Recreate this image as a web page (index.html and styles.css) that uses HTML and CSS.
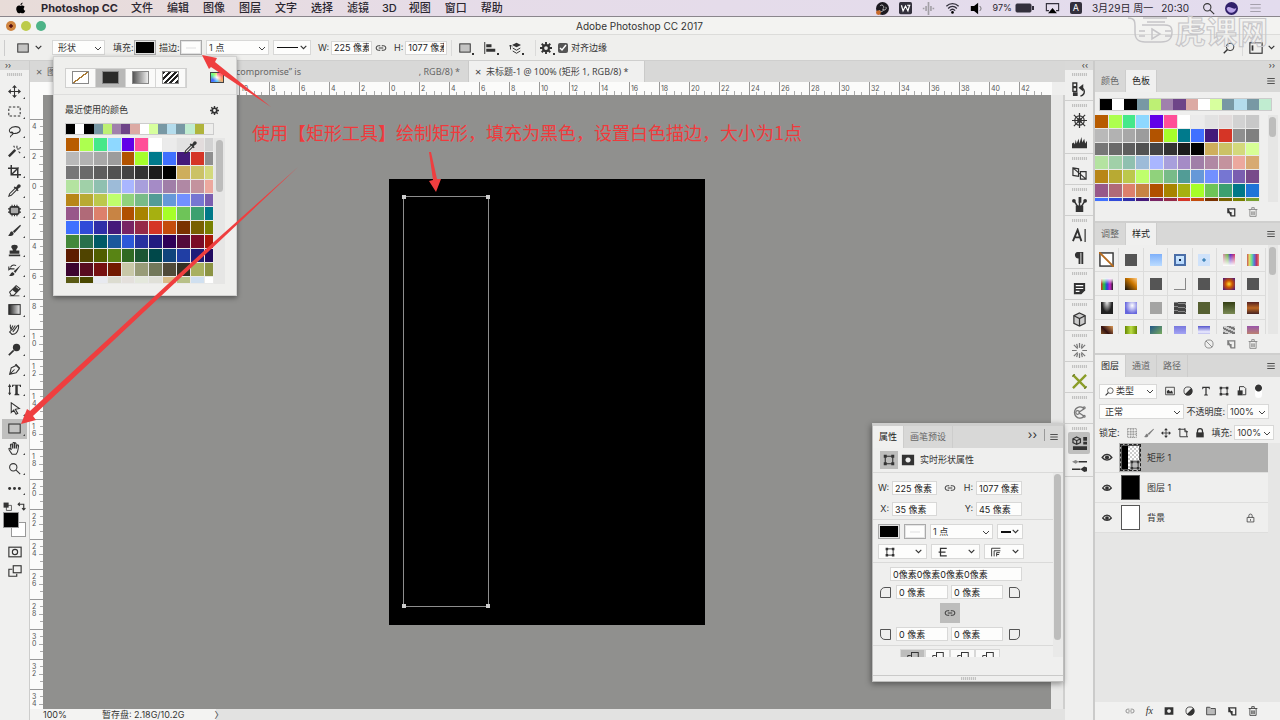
FILE: index.html
```html
<!DOCTYPE html>
<html lang="zh-CN">
<head>
<meta charset="utf-8">
<title>Adobe Photoshop CC 2017</title>
<link rel="stylesheet" href="styles.css">
</head>
<body>
<svg class="sprite" aria-hidden="true">
  <symbol id="link" viewBox="0 0 16 16"><path d="M7 5H4.500a3 3 0 0 0 0 6H7M9 5h2.500a3 3 0 0 1 0 6H9M5 8h6"/></symbol>
  <symbol id="burger" viewBox="0 0 16 16"><path d="M2 4h12M2 8h12M2 12h12"/></symbol>
  <symbol id="chev" viewBox="0 0 16 16"><path stroke-width="2" d="M3 5l5 5 5-5"/></symbol>
  <symbol id="gear" viewBox="0 0 16 16"><circle cx="8" cy="8" r="4" stroke-width="3"/><path stroke-width="2.500" d="M8 0v4M8 12v4M0 8h4M12 8h4M2.300 2.300l3 3M10.700 10.700l3 3M2.300 13.700l3-3M10.700 5.300l3-3"/></symbol>
  <symbol id="search" viewBox="0 0 16 16"><circle cx="6.500" cy="6.500" r="4.500"/><path d="M10 10l5 5"/></symbol>
  <symbol id="searchl" viewBox="0 0 16 16"><circle cx="9.500" cy="6.500" r="5"/><path stroke-width="2" d="M6 10l-5 5"/></symbol>
  <symbol id="move" viewBox="0 0 16 16"><path d="M8 2v12M2 8h12"/><path class="f" d="M8 0l3 3.500H5zM8 16l3-3.500H5zM0 8l3.500-3v6zM16 8l-3.500-3v6z"/></symbol>
  <symbol id="marquee" viewBox="0 0 16 16"><rect x="1" y="2.500" width="14" height="11" stroke-dasharray="3 2"/></symbol>
  <symbol id="lasso" viewBox="0 0 16 16"><path d="M4 10C-1 7 3 2 9 2c7 0 8 6 2 8-4 1-7 0-7-1s3 0 2 2-3 1-3 4"/></symbol>
  <symbol id="wand" viewBox="0 0 16 16"><path stroke-width="3" d="M1 14l8-8"/><path d="M11 1v3M14 4l2-1M13 8l2 2M7 1l1 2M11 5l3 0"/></symbol>
  <symbol id="crop" viewBox="0 0 16 16"><path stroke-width="1.800" d="M4 0v12h12M0 4h12v12M5 11l8-8"/></symbol>
  <symbol id="dropper" viewBox="0 0 16 16"><path d="M9 5L2 12l-1 3 3-1 7-7"/><path class="f" d="M7 4l5 5 1-1-1-2 3-2c2-2-1-5-3-3l-2 3-2-1z"/></symbol>
  <symbol id="patch" viewBox="0 0 16 16"><rect x="2.500" y="3.500" width="11" height="9" rx="2" fill="#aaa" stroke-width="2"/><path d="M5 1v3M8 1v3M11 1v3M5 12v3M8 12v3M11 12v3M0 6h3M0 10h3M13 6h3M13 10h3"/></symbol>
  <symbol id="brush" viewBox="0 0 16 16"><path class="f" d="M15 1L6 9l2 2 8-9zM5 9c-3 0-2 4-5 5 4 2 7 0 7-3z"/></symbol>
  <symbol id="stamp" viewBox="0 0 16 16"><path class="f" d="M6 8c0-2-2-3-2-4a4 3 0 0 1 8 0c0 1-2 2-2 4h4v4H2V8zM1 13h14v2H1z"/></symbol>
  <symbol id="hbrush" viewBox="0 0 16 16"><path class="f" d="M16 1L7 9l2 2zM6 10c-3 0-2 3-5 4 4 2 7 0 7-2z"/><path d="M2 6h6M1 3v4l3-2M3 4c2-3 5-3 7-2"/></symbol>
  <symbol id="eraser" viewBox="0 0 16 16"><path d="M2 10l8-8 5 4-8 8H4z"/><path class="f" d="M5 7l4-4 5 4-4 4zM2 15h12v-1H2z"/></symbol>
  <symbol id="smudge" viewBox="0 0 16 16"><path d="M3 2c-1 4 1 5 1 7l-2 2 3 3c5 0 7-3 8-8V2M6 3L4 7M9 3l-4 6M12 3L6 11"/></symbol>
  <symbol id="dodge" viewBox="0 0 16 16"><circle class="f" cx="10.500" cy="5.500" r="4.500"/><path stroke-width="2" d="M7 9l-6 6"/></symbol>
  <symbol id="pen" viewBox="0 0 16 16"><path d="M2 14l2-8 6-3 4 4-4 5zM2 14l6-6M9 2l5 5"/><path class="f" d="M10 1l5 5-1 1-5-5z"/></symbol>
  <symbol id="type" viewBox="0 0 16 16"><path d="M2 3v11" /><path class="f" d="M0 5l2-4 2 4zM0 12h4l-2 3zM5 2h11v3h-1l-1-2h-2v10l2 1v1H8v-1l1-1V3H7L6 5H5z"/></symbol>
  <symbol id="arrow" viewBox="0 0 16 16"><path d="M4 1v12l3-3 3 5 2-1-3-5 5-1z"/></symbol>
  <symbol id="rect" viewBox="0 0 16 16"><rect x="1" y="2.500" width="14" height="11" fill="#c4c4c3"/></symbol>
  <symbol id="hand" viewBox="0 0 16 16"><path d="M5 15C3 12 1 10 1 8c1-1 2 0 3 2L3 4c0-2 2-2 2 0l1 4V2c0-2 2-2 2 0v6-6c0-2 2-1 2 1v5l1-4c1-1 2 0 2 1-1 4 0 7-3 10z"/></symbol>
  <symbol id="dots" viewBox="0 0 16 16"><circle class="f" cx="2" cy="8" r="1.800"/><circle class="f" cx="8" cy="8" r="1.800"/><circle class="f" cx="14" cy="8" r="1.800"/></symbol>
  <symbol id="grad" viewBox="0 0 16 16"><rect x="1" y="2" width="14" height="12" fill="url(#gr)"/></symbol>
  <symbol id="mask" viewBox="0 0 16 16"><path class="f" fill-rule="evenodd" d="M1 2h14v12H1zM8 5a3 3 0 1 0 .1 0z"/></symbol>
  <symbol id="qmask" viewBox="0 0 16 16"><rect x="1" y="2.500" width="14" height="11"/><circle cx="8" cy="8" r="3"/></symbol>
  <symbol id="screen" viewBox="0 0 16 16"><path d="M5 6H1v8h9v-3"/><rect x="6" y="2" width="9" height="8"/></symbol>
  <symbol id="page" viewBox="0 0 16 16"><path stroke-width="2" d="M3 3h11v11H8zM8 14V9H3V3"/></symbol>
  <symbol id="trash" viewBox="0 0 16 16"><path d="M1 4h14M3 4v11h10V4M6 4V1h4v3M6 7v6M8 7v6M10 7v6"/></symbol>
  <symbol id="no" viewBox="0 0 16 16"><circle cx="8" cy="8" r="6.500"/><path d="M3 3l10 10"/></symbol>
  <symbol id="half" viewBox="0 0 16 16"><circle cx="8" cy="8" r="6.500"/><path class="f" d="M13 3A7 7 0 1 1 3 13z"/></symbol>
  <symbol id="folder" viewBox="0 0 16 16"><path fill="#bbb" d="M1 14V2h5l2 2h7v10z"/></symbol>
  <symbol id="pic" viewBox="0 0 16 16"><path d="M1 2h14v12H1z"/><path class="f" d="M3 12V8l3-2 2 3 3-2 2 5z"/></symbol>
  <symbol id="tee" viewBox="0 0 16 16"><path class="f" d="M2 1h12v4h-1l-1-2H9v10l2 1v1H5v-1l2-1V3H4L3 5H2z"/></symbol>
  <symbol id="shape" viewBox="0 0 16 16"><path d="M3 3h10v10H3z" stroke-width="1.500"/><path class="f" d="M1 1h4v4H1zM11 1h4v4h-4zM1 11h4v4H1zM11 11h4v4h-4z"/></symbol>
  <symbol id="board" viewBox="0 0 16 16"><path stroke-width="1.500" d="M3 0v14h11V5L10 2H0M11 0v6h5M14 14h2"/></symbol>
  <symbol id="smart" viewBox="0 0 16 16"><path stroke-width="1.500" d="M4 8V1h7l3 3v10H9"/><path class="f" d="M1 7h8v8H1z"/></symbol>
  <symbol id="checker" viewBox="0 0 16 16"><path d="M1 1h14v14H1zM6 1v14M10 1v14M1 6h14M1 10h14" stroke-dasharray="2 1"/></symbol>
  <symbol id="lock" viewBox="0 0 16 16"><path class="f" d="M2 7h12v8H2z"/><path stroke-width="2" d="M4 8V5a4 4 0 0 1 8 0v3"/></symbol>
  <symbol id="lockl" viewBox="0 0 16 16"><path d="M2 7h12v8H2zM5 7V4a3 3 0 0 1 6 0v3M8 10v3"/></symbol>
  <symbol id="eye" viewBox="0 0 16 16"><path stroke-width="2" d="M1 8c4-6 10-6 14 0-4 5-10 5-14 0z"/><circle class="f" cx="8" cy="8" r="3"/></symbol>
  <symbol id="align" viewBox="0 0 16 16"><path d="M1 0v16"/><path class="f" d="M3 3h7v4H3zM3 9h12v4H3z"/></symbol>
  <symbol id="stack" viewBox="0 0 16 16"><path class="f" d="M4 4l6-3 6 3-6 3z"/><path d="M5 8l5 3 5-3M5 12l5 3 5-3M2 10V4M0 6l2-2 2 2"/></symbol>
  <symbol id="none" viewBox="0 0 16 16"><rect x="1" y="1" width="14" height="14" fill="#fff" stroke-width="1.500"/><path stroke="#b76b1c" stroke-width="2" d="M0 0l16 16"/></symbol>
  <linearGradient id="gr"><stop offset="0" stop-color="#222"/><stop offset="1" stop-color="#eee"/></linearGradient>
</svg>

<div class="app">
  <header class="menubar">
    <svg class="apple" viewBox="0 0 16 16"><path d="M11 0c0 2-1 3-3 4 0-2 1-3 3-4zM8 5c2-1 4-1 6 1-2 2-2 5 1 6-2 5-4 4-7 3-3 2-5 0-6-4C1 7 4 3 8 5z"/></svg>
    <nav class="menus"><b>Photoshop CC</b><span>文件</span><span>编辑</span><span>图像</span><span>图层</span><span>文字</span><span>选择</span><span>滤镜</span><span class="td">3D</span><span>视图</span><span>窗口</span><span>帮助</span></nav>
    <div class="tray">
      <svg class="t13" viewBox="0 0 16 16"><circle cx="8" cy="8" r="8" fill="#1c1a20"/><path d="M5 5c2-3 6 0 4 3M12 6c2 3-2 5-4 3M4 10c2 3 5 2 5-1" fill="none" stroke="#ddd"/><circle cx="3" cy="13" r="3" fill="#c86a2a"/></svg>
      <svg class="t13" viewBox="0 0 16 16"><rect width="16" height="15" rx="2" fill="#33303c"/><path d="M3 4l2 7 3-6 3 6 2-7M10 4h4" fill="none" stroke="#fff" stroke-width="1.500"/></svg>
      <svg class="t13 dim" viewBox="0 0 16 16"><path d="M8 0v16M5 5v6M11 5v6M2 7v2M14 7v2" stroke="#777" stroke-width="2"/></svg>
      <svg class="t16" viewBox="0 0 16 16"><path d="M1 6c4-4 10-4 14 0M3 8.500c3-3 7-3 10 0M5 11c2-2 4-2 6 0" fill="none" stroke="#33303c" stroke-width="1.500"/><circle cx="8" cy="13" r="1.500"/></svg>
      <svg class="t13" viewBox="0 0 16 16"><path d="M1 5h4l5-4v14l-5-4H1z"/><path d="M12 5c2 2 2 4 0 6" fill="none" stroke="#555"/></svg>
      <span class="pct">97%</span>
      <svg class="batt" viewBox="0 0 20 12"><rect x="1" y="2" width="15" height="8" rx="1" stroke="#33303c" fill="#33303c"/><path d="M18 4v4"  stroke="#33303c" stroke-width="2"/></svg>
      <svg class="t16" viewBox="0 0 16 16"><path d="M4 11H1V3h14v8h-3" fill="none" stroke="#33303c" stroke-width="1.300"/><path d="M8 8l5 6H3z"/></svg>
      <span class="abox">A</span><span class="date">3月29日 周一</span><span class="time">20:30</span>
      <svg class="t13 ic"><use href="#search"/></svg>
      <svg class="t13" viewBox="0 0 16 16"><circle cx="8" cy="8" r="8" fill="#30206a"/><path d="M2 8c3-5 8 3 12-1-1 8-11 8-12 1z" fill="#b9a4e8"/></svg>
      <svg class="t16 ic faint"><use href="#burger"/></svg>
    </div>
  </header>
  <div class="titlebar"><i class="d1"></i><i class="d2"></i><i class="d3"></i><h1>Adobe Photoshop CC 2017</h1></div>

  <div class="options">
    <span class="grip"></span>
    <button class="tool-now" aria-label="矩形工具"><svg class="ic"><use href="#rect"/></svg><svg class="ic c9"><use href="#chev"/></svg></button>
    <select class="w52" aria-label="模式"><option>形状</option></select>
    <span class="lab">填充:</span><button class="chip black" aria-label="填充"></button>
    <span class="lab">描边:</span><button class="chip white" aria-label="描边"></button>
    <select class="w62" aria-label="描边宽度"><option>1 点</option></select>
    <button class="linesel" aria-label="线型"><i></i><svg class="ic c9"><use href="#chev"/></svg></button>
    <label class="num">W:<input value="225 像素"></label>
    <svg class="ic i12"><use href="#link"/></svg>
    <label class="num second">H:<input value="1077 像素"></label>
    <span class="sep"></span>
    <button class="ob" aria-label="路径操作"><svg class="ic"><use href="#rect"/></svg></button>
    <button class="ob" aria-label="对齐"><svg class="ic"><use href="#align"/></svg></button>
    <button class="ob" aria-label="排列"><svg class="ic"><use href="#stack"/></svg></button>
    <span class="sep"></span>
    <button class="ob last" aria-label="设置"><svg class="ic"><use href="#gear"/></svg></button>
    <label class="check"><input type="checkbox" checked>对齐边缘</label>
    <span class="grow"></span>
    <svg class="ic i12"><use href="#searchl"/></svg><span class="sep"></span>
    <svg class="ic ws" viewBox="0 0 16 16"><rect x="1" y="2" width="14" height="12"/><path d="M4 5v6" stroke-width="2"/></svg><svg class="ic c9"><use href="#chev"/></svg>
    <div class="watermark"><svg viewBox="0 0 48 30"><path d="M1 3c7 0 7 4 7 8v6c0 8 4 10 10 10h16c8 0 11-3 11-10s-4-7-8-7H15M16 3h24M20 7h18M12 16h6M38 16h6M12 21h6M38 21h6M25 14l8 5-8 5z"/></svg><span>虎课网</span></div>
  </div>

  <main class="work">
    <aside class="tools"><div class="strip">››</div><span class="dotgrip"></span><div class="toollist" id="tools"></div>
      <div class="mini"><svg class="ic i9" viewBox="0 0 16 16"><path d="M6 6h9v9H6z"/><path class="f" d="M1 1h9v9H1z"/></svg><svg class="ic i9" viewBox="0 0 16 16"><path stroke-width="2" d="M2 4h10v10M5 1L2 4l3 3M9 11l3 3 3-3"/></svg></div>
      <div class="fgbg"><i></i><b></b></div>
      <button aria-label="快速蒙版"><svg class="ic i14"><use href="#qmask"/></svg></button><button aria-label="屏幕模式"><svg class="ic i14"><use href="#screen"/></svg></button>
    </aside>

    <section class="doc">
      <div class="tabs"><div class="tab t1"><span class="x">×</span><span>图</span><span class="mid">compromise” is</span><span class="end">, RGB/8) *</span></div><div class="tab t2"><span class="x">×</span>未标题-1 @ 100% (矩形 1, RGB/8) *</div></div>
      <div class="hrule" id="hrule"></div>
      <div class="body">
        <div class="vrule" id="vrule"></div>
        <div class="canvas"><div class="art"><div class="shape"><i></i><i></i><i></i><i></i></div></div><p class="note">使用【矩形工具】绘制矩形，填充为黑色，设置白色描边，大小为1点</p></div>
        <div class="vscroll"></div>
      </div>
      <footer class="status"><span class="zoom">100%</span><span class="disk">暂存盘: 2.18G/10.2G</span><span>〉</span></footer>
    </section>

    <aside class="dock"><div class="strip right">‹‹</div><div id="dock"></div></aside>

    <aside class="panels">
      <div class="strip right">››</div>
      <div class="ptabs"><span>颜色</span><b>色板</b><svg class="ic"><use href="#burger"/></svg></div>
      <div class="swpanel"><div class="recent" id="recent"></div><div class="swrow"><div class="swgrid" id="swatches"></div><div class="sbar"><i></i></div></div></div>
      <div class="pfoot"><svg class="ic"><use href="#page"/></svg><svg class="ic dim"><use href="#trash"/></svg></div>
      <div class="ptabs"><span>调整</span><b>样式</b><svg class="ic"><use href="#burger"/></svg></div>
      <div class="stylebox"><div class="stylegrid" id="styles"></div><div class="sbar"><i></i></div></div>
      <div class="pfoot"><svg class="ic dim"><use href="#no"/></svg><svg class="ic dim"><use href="#page"/></svg><svg class="ic dim"><use href="#trash"/></svg></div>
      <div class="ptabs"><b>图层</b><span>通道</span><span>路径</span><svg class="ic"><use href="#burger"/></svg></div>
      <div class="lrow filter"><div class="kind"><svg class="ic i9"><use href="#searchl"/></svg><select aria-label="类型"><option>类型</option></select></div><svg class="ic"><use href="#pic"/></svg><svg class="ic"><use href="#half"/></svg><svg class="ic"><use href="#tee"/></svg><svg class="ic"><use href="#shape"/></svg><svg class="ic"><use href="#smart"/></svg><i class="toggle"></i></div>
      <div class="lrow"><select class="blend" aria-label="混合模式"><option>正常</option></select><span>不透明度:</span><select class="pc" aria-label="不透明度"><option>100%</option></select></div>
      <div class="lrow locks"><span>锁定:</span><svg class="ic dim"><use href="#checker"/></svg><svg class="ic dim"><use href="#brush"/></svg><svg class="ic"><use href="#move"/></svg><svg class="ic"><use href="#board"/></svg><svg class="ic"><use href="#lock"/></svg><span class="push">填充:</span><select class="pc" aria-label="填充"><option>100%</option></select></div>
      <div class="layers">
        <div class="layer on"><svg class="ic eye"><use href="#eye"/></svg><div class="thumb shp"><svg class="ic"><use href="#shape"/></svg></div><span>矩形 1</span></div>
        <div class="layer"><svg class="ic eye"><use href="#eye"/></svg><div class="thumb blk"></div><span>图层 1</span></div>
        <div class="layer"><svg class="ic eye"><use href="#eye"/></svg><div class="thumb"></div><span>背景</span><svg class="ic lk"><use href="#lockl"/></svg></div>
      </div>
      <div class="pfoot lf"><svg class="ic dim"><use href="#link"/></svg><em>fx</em><svg class="ic"><use href="#mask"/></svg><svg class="ic"><use href="#half"/></svg><svg class="ic"><use href="#folder"/></svg><svg class="ic"><use href="#page"/></svg><svg class="ic"><use href="#trash"/></svg></div>
    </aside>
  </main>

  <section class="popup">
    <div class="ptop"><div class="seg"><button aria-label="无"><i class="p1"></i></button><button class="on" aria-label="纯色"><i class="p2"></i></button><button aria-label="渐变"><i class="p3"></i></button><button aria-label="图案"><i class="p4"></i></button></div><button class="picker" aria-label="拾色器"></button></div>
    <div class="phead"><span>最近使用的颜色</span><svg class="ic"><use href="#gear"/></svg></div>
    <div class="recent" id="precent"></div>
    <div class="swrow"><div class="swgrid" id="pswatches"></div><div class="sbar"><i></i></div></div>
    <svg class="ic cursor"><use href="#dropper"/></svg>
  </section>

  <section class="props">
    <div class="ptabs"><b>属性</b><span>画笔预设</span><i class="more">››</i><svg class="ic"><use href="#burger"/></svg></div>
    <div class="kindrow"><button class="on" aria-label="形状"><svg class="ic"><use href="#shape"/></svg></button><svg class="ic i14"><use href="#mask"/></svg><span>实时形状属性</span></div>
    <div class="scroller"><div class="fields">
      <div class="fgrid">
        <label for="pw">W:</label><input id="pw" value="225 像素"><svg class="ic"><use href="#link"/></svg><label for="ph">H:</label><input id="ph" value="1077 像素">
        <label for="px">X:</label><input id="px" value="35 像素"><span></span><label for="py">Y:</label><input id="py" value="45 像素">
      </div>
      <div class="frow top"><button class="chip black" aria-label="填充"></button><button class="chip white" aria-label="描边"></button><select class="w62" aria-label="宽度"><option>1 点</option></select><button class="linesel" aria-label="线型"><i></i><svg class="ic c9"><use href="#chev"/></svg></button></div>
      <div class="frow"><button class="pick" aria-label="对齐类型"><svg class="ic"><use href="#shape"/></svg><svg class="ic c9"><use href="#chev"/></svg></button><button class="pick" aria-label="端点"><svg class="ic" viewBox="0 0 16 16"><path stroke-width="2" d="M14 2H4v12h10M1 8h11"/></svg><svg class="ic c9"><use href="#chev"/></svg></button><button class="pick s" aria-label="角点"><svg class="ic" viewBox="0 0 16 16"><path stroke-width="1.500" d="M1 15V2h14M5 15V6h10M9 15V9h5M9 12h4"/></svg><svg class="ic c9"><use href="#chev"/></svg></button></div>
      <div class="corners"><input class="all" aria-label="圆角" value="0像素0像素0像素0像素">
        <div class="crow"><i class="tl"></i><input aria-label="左上" value="0 像素"><input aria-label="右上" value="0 像素"><i class="tr"></i></div>
        <button class="lnk" aria-label="链接"><svg class="ic"><use href="#link"/></svg></button>
        <div class="crow"><i class="bl"></i><input aria-label="左下" value="0 像素"><input aria-label="右下" value="0 像素"><i class="br"></i></div>
      </div>
      <div class="ops"><button class="on" aria-label="合并"><svg class="ic"><use href="#screen"/></svg></button><button aria-label="减去"><svg class="ic"><use href="#screen"/></svg></button><button aria-label="相交"><svg class="ic"><use href="#screen"/></svg></button><button aria-label="排除"><svg class="ic"><use href="#screen"/></svg></button></div>
    </div><div class="sbar"><i></i></div></div>
    <div class="pbottom"><span class="dotgrip"></span></div>
  </section>

  <svg class="arrows" viewBox="0 0 1280 720" aria-hidden="true"><path d="M202 55L217 58 215 62 271 107 211 67 209 69zM436 192L429 181 433 180 429 152 431 152 437 179 441 179zM21 424L27 409 30 411 206 249 298 167 208 252 33 416 36 420z"/></svg>
</div>
<script src="app.js"></script>
</body>
</html>
```
FILE: styles.css
```css
* { box-sizing: border-box; }
body { margin: 0; background: #eeeeed; color: #333; font: 9px/12px Inter, "Noto Sans CJK SC", sans-serif; }
i, em { font-style: normal; }
button, input, select { font: inherit; color: inherit; margin: 0; padding: 0; border: 0; border-radius: 0; background: none; }
.sprite { position: absolute; width: 0; height: 0; }
.app { position: relative; height: 100vh; display: flex; flex-direction: column; overflow: hidden; }
svg { flex: none; display: block; }
.ic { width: 12px; height: 12px; fill: none; stroke: #333; stroke-width: 1.3; color: #333; }
.f { fill: #333; stroke: none; }
.dim { opacity: .6; }
.faint { opacity: .35; }
.c9, .i9 { width: 9px; height: 9px; }
.i14 { width: 14px; height: 14px; }
.grow { flex: 1; }
select { appearance: none; height: 15px; padding: 0 12px 0 5px; background: #fdfdfc url("data:image/svg+xml,%3Csvg xmlns='http://www.w3.org/2000/svg' width='8' height='8'%3E%3Cpath d='M1 3l3 3 3-3' fill='none' stroke='%23444'/%3E%3C/svg%3E") no-repeat right 2px center; border: 1px solid #d8d8d7; }
input { height: 14px; min-width: 0; padding: 0 2px; background: #fdfdfc; border: 1px solid #d8d8d7; color: #222; }

.menubar { height: 17px; flex: none; display: flex; align-items: center; background: linear-gradient(90deg, #e8dcd8, #e6dce8 35%, #e3dcee); border-bottom: 1px solid #8a868c; font-size: 11px; color: #2b2730; }
.apple { width: 11px; height: 12px; margin-left: 15px; }
.menus { display: flex; gap: 14px; margin-left: 15px; font-weight: 500; white-space: nowrap; }
.menus b { font-weight: 700; margin-right: -1px; }
.menus .td { margin: 0 -2px 0 -1px; }
.tray { margin-left: auto; display: flex; align-items: center; gap: 10px; padding-right: 17px; white-space: nowrap; font-size: 10px; }
.t13 { width: 13px; height: 13px; }
.t16 { width: 15px; height: 14px; }
.pct { font-size: 9px; }
.batt { width: 20px; height: 12px; margin-left: -7px; }
.abox { width: 12px; height: 12px; border-radius: 2px; background: #33303c; color: #fff; font-size: 9px; text-align: center; }
.time { margin-left: -2px; padding-right: 3px; }
.titlebar { position: relative; height: 18px; flex: none; display: flex; align-items: center; gap: 5px; padding-left: 6px; background: #f3f3f1; border-bottom: 1px solid #dcdcda; }
.titlebar i { width: 10px; height: 10px; border-radius: 50%; }
.d1 { background: radial-gradient(#511 20%, #cf8540 30%); }
.d2 { background: #bccb4a; }
.d3 { background: #4db387; }
.titlebar h1 { flex: 1; margin: 0; text-align: center; font-size: 10px; font-weight: 400; padding-right: 52px; }

.options { position: relative; height: 26px; flex: none; display: flex; align-items: center; background: #efefed; border-bottom: 1px solid #cfcfce; padding: 0 4px; white-space: nowrap; }
.grip { width: 2px; height: 16px; border-left: 1px solid #ccc; margin-right: 10px; }
.tool-now { display: flex; align-items: center; gap: 4px; width: 36px; }
.tool-now .ic:first-child { width: 14px; }
.w52 { width: 53px; }
.w62 { width: 63px; }
.lab { width: 20px; margin: 0 1px 0 8px; }
.chip { width: 22px; height: 15px; border: 1px solid #aaa; outline: 1px solid #e4e4e4; outline-offset: -2px; }
.chip + .lab { margin-left: 3px; }
.black { background: #000; }
.white { background: linear-gradient(#eee, #eee) center / 10px 2px no-repeat #fdfdfc; }
.options .w62 { margin-left: 4px; padding-left: 2px; }
.linesel { display: flex; align-items: center; justify-content: space-between; width: 38px; height: 15px; padding: 0 2px 0 3px; background: #fdfdfc; border: 1px solid #d8d8d7; }
.options .linesel { margin-left: 4px; }
.linesel i { width: 21px; height: 1px; background: #111; }
.num { display: flex; align-items: center; gap: 2px; margin-left: 7px; width: 54px; }
.num.second { margin-left: 4px; width: 53px; }
.num input { flex: 1; width: 38px; }
.i12 { width: 12px; height: 12px; margin: 0 3px; }
.sep { width: 1px; height: 16px; background: #dadad9; margin: 0 4px; }
.ob { width: 25px; padding-left: 3px; position: relative; }
.ob::after { content: ""; position: absolute; left: 16px; bottom: -1px; border: 1px solid #333; }
.ob.last { width: 18px; padding-left: 0; }
.ob.last::after { left: 13px; }
.check { display: flex; align-items: center; gap: 3px; }
.check input { appearance: none; width: 10px; height: 10px; border-radius: 2px; border: 0; background: #555 url("data:image/svg+xml,%3Csvg xmlns='http://www.w3.org/2000/svg' width='10' height='10'%3E%3Cpath d='M2 5l2 2 4-5' fill='none' stroke='%23fff' stroke-width='1.5'/%3E%3C/svg%3E"); }
.ws { width: 14px; height: 14px; margin: 0 4px 0 2px; }
.watermark { position: absolute; right: 12px; top: -20px; display: flex; align-items: center; font: 700 31px/30px "Noto Sans CJK SC", sans-serif; color: transparent; -webkit-text-stroke: 1px #c6c5c8; }
.watermark svg { width: 48px; height: 30px; fill: none; stroke: #c6c5c8; stroke-width: 1.5; }

.work { flex: 1; min-height: 0; display: flex; }
.strip { height: 9px; flex: none; background: #d9d9d8; padding: 0 5px; font-size: 8px; line-height: 8px; }
.strip.right { text-align: right; }
.tools { width: 30px; flex: none; display: flex; flex-direction: column; align-items: center; border-right: 1px solid #cdcdcc; background: #f0f0ef; }
.tools .strip { width: 100%; }
.dotgrip { width: 15px; height: 3px; flex: none; background: repeating-linear-gradient(90deg, #c2c2c1 0 1px, #e4e4e3 1px 2px); }
.tools > .dotgrip { margin: 3px 0 6px; }
.toollist { width: 25px; height: 416px; display: flex; flex-direction: column; }
.toollist button { position: relative; flex: 1; display: flex; align-items: center; justify-content: center; }
.toollist button.on { background: #bfbfbe; }
.toollist button::after { content: ""; position: absolute; right: 2px; bottom: 3px; border: 1px solid #444; border-top-color: transparent; border-left-color: transparent; }
.toollist .ic { width: 13px; height: 13px; }
.mini { display: flex; gap: 5px; margin-top: 4px; }
.fgbg { position: relative; width: 22px; height: 24px; margin: 2px 0 5px; }
.fgbg i { position: absolute; right: 0; bottom: 0; width: 15px; height: 15px; background: #fff; border: 1px solid #999; }
.fgbg b { position: absolute; left: 0; top: 0; width: 14px; height: 14px; background: #000; outline: 1px solid #999; }
.tools > button { height: 19px; }

.doc { flex: 1; min-width: 0; display: flex; flex-direction: column; }
.tabs { height: 21px; flex: none; display: flex; background: #d8d8d7; color: #666; font: 9px/12px "Noto Sans", "Noto Sans CJK SC", sans-serif; white-space: nowrap; }
.tab { display: flex; align-items: center; border-right: 1px solid #cacac9; }
.t1 { width: 439px; }
.t1 .x, .t2 .x { width: 11px; margin-left: 6px; font-size: 11px; }
.t1 .mid { margin-left: 180px; }
.t1 .mid + .end { margin-left: auto; margin-right: 8px; }
.t2 { width: 176px; background: #f0f0ef; color: #444; }
.hrule { height: 13px; flex: none; display: flex; overflow: hidden; margin-right: 13px; padding-left: 29px; background: #fbfbfa; color: #555; font-size: 7px; line-height: 14px; }
.hrule span { flex: none; width: 30px; padding-left: 1px; border-left: 1px solid #999; background: linear-gradient(#aaa, #aaa) 6px 100% / 1px 3px no-repeat, linear-gradient(#aaa, #aaa) 14px 100% / 1px 4px no-repeat, linear-gradient(#aaa, #aaa) 21px 100% / 1px 3px no-repeat; }
.body { flex: 1; min-height: 0; display: flex; }
.vrule { width: 13px; flex: none; overflow: hidden; padding-top: 24px; background: #fbfbfa; color: #555; font-size: 7px; line-height: 7px; }
.vrule span { display: block; height: 30px; width: 13px; padding: 3px 8px 0 2px; border-top: 1px solid #999; word-break: break-all; background: linear-gradient(#aaa, #aaa) 100% 6px / 3px 1px no-repeat, linear-gradient(#aaa, #aaa) 100% 14px / 4px 1px no-repeat, linear-gradient(#aaa, #aaa) 100% 21px / 3px 1px no-repeat; }
.canvas { position: relative; flex: 1; background: #90908e; overflow: hidden; }
.art { position: absolute; left: 346px; top: 84px; width: 316px; height: 446px; background: #000; }
.shape { position: absolute; left: 14px; top: 17px; width: 86px; height: 411px; border: 1px solid #8d8d8d; }
.shape i { position: absolute; width: 4px; height: 4px; background: #ccc; }
.shape i:nth-child(1) { left: -2px; top: -2px; }
.shape i:nth-child(2) { right: -2px; top: -2px; }
.shape i:nth-child(3) { left: -2px; bottom: -2px; }
.shape i:nth-child(4) { right: -2px; bottom: -2px; }
.note { position: absolute; left: 209px; top: 24px; margin: 0; font: 18px/26px "Noto Sans CJK SC", sans-serif; color: #f03a3c; white-space: nowrap; }
.vscroll { width: 14px; background: #e8e8e7; border-right: 2px solid #cfcfce; }
.status { height: 11px; flex: none; display: flex; align-items: center; gap: 30px; padding-left: 13px; background: linear-gradient(90deg, #f3f3f2 186px, #e2e2e1 186px); line-height: 11px; }
.zoom { width: 29px; }

.dock { width: 30px; flex: none; background: #efefee; border-right: 2px solid #cbcbca; }
.dgroup { display: flex; flex-direction: column; align-items: center; padding-top: 3px; border-bottom: 1px solid #cfcfce; }
.dgroup .dotgrip { margin-bottom: 2px; }
.dgroup button { width: 22px; height: 22px; display: flex; align-items: center; justify-content: center; }
.dgroup button.on { background: #bfbfbe; border-radius: 2px; }
.dgroup .ic { width: 15px; height: 15px; }

.panels { width: 185px; flex: none; display: flex; flex-direction: column; background: #efefee; }
.ptabs { height: 22px; flex: none; display: flex; align-items: stretch; background: #d8d8d7; color: #666; }
.ptabs b, .ptabs span { font-weight: 400; padding: 0 6px; border-right: 1px solid #cdcdcc; line-height: 22px; }
.ptabs b { background: #f0f0ef; color: #222; }
.ptabs .ic { width: 10px; height: 10px; margin: 6px 4px 0 auto; }
.panels .ptabs b, .panels .ptabs span { width: 31px; }
.swpanel { padding-top: 6px; }
.recent { display: flex; height: 13px; border: 1px solid #ccc; }
.recent i { flex: 1; }
.panels .recent { margin: 0 8px 4px 4px; }
.swrow { display: flex; }
.swgrid { display: grid; }
.swgrid i { border: solid #e9e9e8; border-width: 0 1px 1px 0; }
.panels .swgrid { width: 165px; height: 87px; grid-template: repeat(6, 1fr) 4px / repeat(12, 1fr); overflow: hidden; }
.sbar { width: 10px; margin-left: auto; background: #e6e6e5; padding: 2px 1px; }
.sbar i { display: block; width: 7px; height: 20px; border-radius: 4px; background: #bdbdbc; }
.panels .sbar { margin-right: 2px; }
.pfoot { height: 21px; flex: none; display: flex; align-items: center; justify-content: flex-end; gap: 12px; padding-right: 22px; border-bottom: 2px solid #cfcfce; }
.pfoot .ic { width: 10px; height: 10px; }
.stylebox { display: flex; height: 89px; flex: none; }
.stylegrid { width: 171px; height: 89px; overflow: hidden; display: grid; grid-template-columns: repeat(7, 1fr); grid-auto-rows: 24px; padding-top: 3px; }
.stylegrid div { display: flex; align-items: center; justify-content: center; border: solid #dcdcdb; border-width: 0 1px 1px 0; }
.stylegrid i { width: 12px; height: 12px; }
.stylegrid .ic { width: 15px; height: 15px; }
.stylebox .sbar i { height: 28px; }
.lrow { height: 21px; flex: none; display: flex; align-items: center; padding: 0 11px 0 4px; gap: 2px; white-space: nowrap; }
.lrow .ic { width: 10px; height: 10px; }
.filter { height: 24px; padding-top: 4px; gap: 8px; }
.kind { display: flex; align-items: center; width: 58px; padding-left: 5px; background: #fdfdfc; border: 1px solid #d8d8d7; }
.kind select { flex: 1; border: 0; height: 13px; padding-left: 2px; }
.kind .ic { width: 9px; height: 9px; }
.toggle { width: 7px; height: 14px; border-radius: 4px; background: radial-gradient(circle at 50% 4px, #333 3px, #fff 4px); }
.blend { flex: 1; }
.pc { width: 42px; padding: 0 12px 0 2px; }
.locks { gap: 7px; }
.locks .push { margin: 0 -5px 0 auto; }
.layers { flex: 1; padding-right: 12px; background: #e6e6e5; }
.layer { height: 30px; display: flex; align-items: center; background: #efefee; border-bottom: 1px solid #dededd; }
.layer.on { background: #b1b1b0; }
.eye { width: 24px; height: 10px; }
.layer.on .eye { height: 29px; background: #efefee; padding: 9px 0; }
.thumb { width: 19px; height: 25px; margin: 0 7px 0 2px; background: #fff; border: 1px solid #555; }
.blk { background: #000; }
.shp { position: relative; background: linear-gradient(90deg, #000 6px, transparent 6px), repeating-conic-gradient(#ccc 0 25%, #fff 0 50%) 0 0 / 4px 4px; outline: 1px dashed #222; }
.shp .ic { position: absolute; right: -1px; bottom: -1px; width: 10px; height: 10px; background: #bbb; }
.lk { width: 9px; height: 10px; margin-left: auto; margin-right: 13px; }
.lf { height: 18px; gap: 11px; border: 0; padding: 0 22px 0 0; background: #f1f1f0; }
.lf em { font: italic 10px/12px "Liberation Serif", serif; }

.popup { position: absolute; left: 53px; top: 56px; width: 184px; height: 240px; background: #efefed; border: 1px solid #d2d2d1; box-shadow: 0 2px 5px rgba(0, 0, 0, .4); }
.ptop { height: 38px; display: flex; align-items: center; padding: 4px 12px 0 11px; border-bottom: 1px solid #dededd; }
.seg { display: flex; border: 1px solid #d0d0cf; background: #fafaf9; }
.seg button { width: 30px; height: 18px; display: flex; align-items: center; justify-content: center; border-right: 1px solid #d6d6d5; }
.seg .on { background: #b9b9b8; }
.seg i { width: 17px; height: 13px; border: 1px solid #888; }
.p1 { background: linear-gradient(to bottom right, #fff 46%, #a87a35 46% 54%, #fff 54%); }
.p2 { background: #2b2b2a; }
.p3 { background: linear-gradient(90deg, #555, #eee); }
.p4 { background: repeating-linear-gradient(135deg, #222 0 2px, #fff 2px 4px); }
.picker { width: 14px; height: 11px; margin-left: auto; border: 1px solid #444; background: radial-gradient(#fff, transparent 60%), conic-gradient(#f7a, #f66, #fa6, #5cf, #46f, #6f8, #fe6); }
.phead { height: 28px; display: flex; align-items: center; justify-content: space-between; padding: 2px 17px 0 11px; font-size: 9px; }
.phead .ic { width: 9px; height: 9px; }
.popup .recent { width: 149px; height: 12px; margin-left: 11px; }
.popup .swrow { margin: 3px 11px 0 12px; }
.popup .swgrid { width: 148px; height: 146px; grid-template: repeat(10, 1fr) 7px / repeat(10, 1fr) 9px; overflow: hidden; }
.popup .sbar i { height: 52px; }
.popup .sbar { margin-left: 0; width: 11px; padding-left: 2px; }
.cursor { position: absolute; left: 130px; top: 84px; width: 13px; height: 13px; }

.props { position: absolute; right: 216px; top: 423px; width: 192px; height: 259px; display: flex; flex-direction: column; background: #efefee; border: 1px solid #bdbdbc; border-top: 3px solid #cececd; box-shadow: -1px 2px 6px rgba(0, 0, 0, .4); }
.more { height: 12px; margin: 3px 4px 0 auto; padding-right: 7px; border-right: 1px solid #999; font-size: 12px; line-height: 12px; }
.props .ptabs .ic { margin-left: 0; }
.props .ptabs .more { color: #333; }
.kindrow { height: 25px; flex: none; display: flex; align-items: center; gap: 3px; padding-left: 7px; border-bottom: 1px solid #dadad9; }
.kindrow button { width: 18px; height: 18px; padding: 3px; background: #bdbdbc; }
.kindrow span { margin-left: 2px; }
.scroller { height: 184px; display: flex; overflow: hidden; }
.props .sbar { padding: 1px; background: #e9e9e8; }
.props .sbar i { height: 166px; }
.fields { width: 180px; }
.fgrid { display: grid; grid-template-columns: 14px 45px 24px 12px 46px; gap: 7px 1px; padding: 8px 0 3px 4px; border-bottom: 1px solid #dadad9; align-items: center; }
.fgrid label { text-align: right; padding-right: 2px; }
.fgrid .ic { justify-self: center; }
.frow { display: flex; gap: 4px; padding: 2px 0 3px 5px; }
.frow.top { padding-top: 4px; }
.frow .w62 { padding-left: 2px; }
.frow .linesel { width: 26px; }
.frow .linesel i { width: 11px; height: 2px; }
.frow + .frow { border-bottom: 1px solid #dadad9; }
.pick { width: 49px; height: 15px; display: flex; align-items: center; justify-content: space-between; padding: 0 3px 0 6px; background: #fdfdfc; border: 1px solid #d8d8d7; }
.pick .ic { width: 10px; height: 10px; }
.pick .c9 { width: 9px; height: 9px; }
.pick.s { width: 40px; }
.corners { display: flex; flex-direction: column; gap: 4px; padding: 4px 0 4px 7px; border-bottom: 1px solid #dadad9; }
.corners .all { width: 132px; margin-left: 10px; }
.crow { display: flex; align-items: center; gap: 3px; }
.crow input { width: 52px; }
.crow i { width: 11px; height: 11px; margin: 0 2px 0 0; border: 1px solid #555; }
.crow input + i { margin-left: 3px; }
.tl { border-top-left-radius: 5px; } .tr { border-top-right-radius: 5px; }
.bl { border-bottom-left-radius: 5px; } .br { border-bottom-right-radius: 5px; }
.lnk { width: 20px; height: 20px; margin-left: 60px; padding: 4px; background: #bdbdbc; }
.ops { display: flex; padding: 3px 0 0 27px; }
.ops button { width: 25px; height: 16px; padding: 1px 6px; background: #fafaf9; border: 1px solid #d8d8d7; }
.ops .on { background: #bdbdbc; }
.pbottom { margin-top: auto; height: 6px; flex: none; display: flex; justify-content: center; align-items: center; border-top: 1px solid #cacac9; }
.arrows { position: absolute; left: 0; top: 0; width: 1280px; height: 720px; fill: #ef3e3f; pointer-events: none; }
```
FILE: app.js
```javascript
const $ = id => document.getElementById(id);
const rows = [
  'b85c00 adff4f 45e88a 8ed8ff 6100e8 ff4f98 ffffff ebebeb e2e2e2 e2dcdc d2d2d2 c8c8c8',
  'b9b9b9 b2b2b2 a8a8a8 9c9c9c b25300 a6ff2b 007a8c 4070ff 441a7a d53526 8f8f8f 808080',
  '777777 6a6a6a 5e5e5e 525252 444444 333333 1c1c1c 000000 ceae5c cbc266 d3d97c d7ff96',
  'b4e3a0 a0d0a8 8fc0b0 9dbbd8 a9b6ff a89fdc a58bc6 a07ea8 b088a4 c4939e eca89e d7aa72',
  'b88618 b8aa33 bcc84c bfff6c 90d27c 78bb88 529c96 6698d8 7290ff 7676d2 7a5eb0 784a8a',
  '98588a b06a78 dd806c c88444 b05000 a88400 a6b010 a6ff28 6ec458 3ca070 007888 1e74d8',
  '4070ff 304ad8 2f2ea8 461a7a 782464 962a48 d53526 c44c0c 7a3200 786000 788000 78a030',
  '44883a 28704c 005a66 1a589c 2c58d8 2832a0 221c80 300058 540a3a 7a0c26 a81808',
  '5e1c00 504400 505e00 588414 306a24 1c5634 00484a 10447c 203ea4 1e1c78 200a60',
  '3c0430 580c20 761010 721a00 c8c8a8 989c78 72785a 504a38 343024 a8b060 8c9444',
  '5a5a14 4a4800 e8eaf0 dcdcd0 e4e0dc e4e8dc e0e0d8 d8bc88 b8c088 d0e0f0 ffffff'
].map(r => r.split(' '));
const paint = (id, colors) => {
  $(id).innerHTML = colors.map(c => `<i style="background:#${c}"></i>`).join('');
};
paint('swatches', rows.slice(0, 7).flat());
paint('pswatches', rows.map(r => r.slice(0, 11)).flat());
const recent = '000000 ffffff 000000 7898a4 bdf074 a080ac 6e4488 dcaaa4 ffffff d7ff9e 7898a4 b4dcec 7898a4 c0ecd0'.split(' ');
paint('recent', recent);
paint('precent', [...recent, 'b0b43c', 'eeeeec']);

const svg = id => `<svg class="ic"><use href="#${id}"/></svg>`;
const toolNames = 'move marquee lasso wand crop dropper patch brush stamp hbrush eraser grad smudge dodge pen type arrow rect hand search dots'.split(' ');
$('tools').innerHTML = toolNames.map(n => `<button class="${n === 'rect' ? 'on' : ''}" aria-label="${n}">${svg(n)}</button>`).join('');

let h = '';
for (let n = -22; n <= 42; n += 2) h += `<span>${Math.abs(n)}</span>`;
$('hrule').innerHTML = h;
let v = '';
for (let n = -4; n <= 34; n += 2) v += `<span>${Math.abs(n)}</span>`;
$('vrule').innerHTML = v;

const F = 'class="f"';
const glyphs = {
  history: `<path d="M1 1h4v4H1zM1 6h4v4H1zM9 15c6-2 5-8 0-9" stroke-width="1.500"/><path ${F} d="M1 11h5v4H1zM12 2v8L7 6z"/>`,
  wheel: '<circle cx="8" cy="8" r="5"/><circle cx="8" cy="8" r="2"/><path d="M8 0v16M0 8h16M2 2l12 12M2 14L14 2"/>',
  histo: `<path ${F} d="M0 14V9l2-1 1 2 1-5 1 4 2-5 1 5 2-7 1 6 2-4 1 5 2-3v8z"/>`,
  compare: '<path d="M1 2l6 1v8l-6-1zM9 6h6v8H9zM1 2l14 12"/>',
  brushes: `<path ${F} d="M4 9h8v7H4zM7 0h3v6H7z"/><circle ${F} cx="2" cy="4" r="2"/><circle ${F} cx="14" cy="4" r="2"/><path stroke-width="1.500" d="M8 5v5M2 4l4 6M14 4l-4 6"/>`,
  char: '<path stroke-width="2" d="M1 14L6 2l4 12M3 10h6"/><path d="M14 1v14"/>',
  para: `<path ${F} d="M6 2h6v13h-2V3H9v12H7V9C2 9 2 2 6 2z"/>`,
  note: `<path ${F} d="M2 2h12v8l-4 4H2z"/><path stroke="#fff" d="M4 5h8M4 8h8M4 11h4"/>`,
  cube: '<path fill="#ccc" d="M8 1l6 3v8l-6 3-6-3V4z"/><path d="M2 4l6 3 6-3M8 7v8"/>',
  burst: '<path stroke="#777" d="M8 0v5M8 11v5M0 8h5M11 8h5M2 2l4 4M10 10l4 4M2 14l4-4M10 6l4-4M5 1l1 4M11 1l-1 4M5 15l1-4M11 15l-1-4"/>',
  cross: '<path stroke="#8b9d28" stroke-width="2.500" d="M1 1l14 14M15 1L1 15"/><path stroke="#5a6a20" stroke-width="1" d="M0 3l3-3M16 13l-3 3"/>',
  share: '<path stroke="#777" stroke-width="1.500" d="M12 3a6 6 0 1 0 0 10M7 8l6-4M7 8l6 4"/><circle cx="6" cy="8" r="2" stroke="#777"/><circle cx="13" cy="3" r="1" stroke="#777"/><circle cx="13" cy="12" r="1" stroke="#777"/>',
  prop: `<path d="M5 1l4 2v4L5 9 1 7V3zM1 3l4 2 4-2M5 5v4"/><path ${F} d="M12 1h4v4h-4zM12 6h4v3h-4zM1 11h15v4H1z"/>`,
  presets: `<path stroke-width="1.500" d="M7 4h9M0 12h9"/><path fill="#888" stroke="none" d="M0 4l4-2 3 2-3 2z"/><path ${F} d="M9 12l4-3 3 1v4l-3 1z"/>`
};
const groups = [['history'], ['wheel', 'histo'], ['compare'], ['brushes'], ['char', 'para'], ['note'], ['cube'], ['burst'], ['cross'], ['share'], ['prop', 'presets']];
$('dock').innerHTML = groups.map(g => '<div class="dgroup"><span class="dotgrip"></span>' +
  g.map(n => `<button class="${n === 'prop' ? 'on' : ''}" aria-label="${n}"><svg class="ic" viewBox="0 0 16 16">${glyphs[n]}</svg></button>`).join('') + '</div>').join('');

const fills = [
  null, '#555', 'linear-gradient(#7eb0fa,#bcdcff)', 'linear-gradient(#124,#124) center/2px 2px no-repeat,linear-gradient(#cde8ff,#b4d6fc) center/8px 8px no-repeat,#4a6ea8', 'radial-gradient(#48b 15%,#cfe2fa 25%)', 'linear-gradient(transparent,#fff),linear-gradient(90deg,#d8a,#6b4 40%,#52c 60%,#d35)', 'linear-gradient(90deg,#c55,#dd6,#6d9,#57d,#b36,#e86)',
  'linear-gradient(#fff,transparent 50%),linear-gradient(90deg,#d22,#2c4,#24d,#c2c,#222)', 'linear-gradient(45deg,#111,#c70 60%,#fc8)', '#555', 'linear-gradient(#888,#888) right/1px 100% no-repeat,linear-gradient(#888,#888) bottom/100% 1px no-repeat', '#555', 'radial-gradient(#fd3,#c50 40%,#418)', '#555',
  'radial-gradient(at top,#eee,#222 60%)', 'radial-gradient(at 60% 30%,#fff,#66d 70%)', '#a4a4a3', 'repeating-linear-gradient(8deg,#444 0 3px,#888 3px 4px)', '#566032', 'linear-gradient(#343f14,#7a8a55)', 'linear-gradient(#522,#b62,#422)',
  'linear-gradient(45deg,#a73,#311,#d95)', 'linear-gradient(90deg,#680,#bd4,#680)', 'linear-gradient(135deg,#258,#8b5)', 'linear-gradient(#77d,#bbf)', 'linear-gradient(#55c,#eef,#55c)', 'repeating-linear-gradient(25deg,#777 0 2px,#ccc 2px 4px)', 'linear-gradient(#95a,#c95)'
];
$('styles').innerHTML = fills.map(f => f ? `<div><i style="background:${f}"></i></div>` : `<div>${svg('none')}</div>`).join('');
```
